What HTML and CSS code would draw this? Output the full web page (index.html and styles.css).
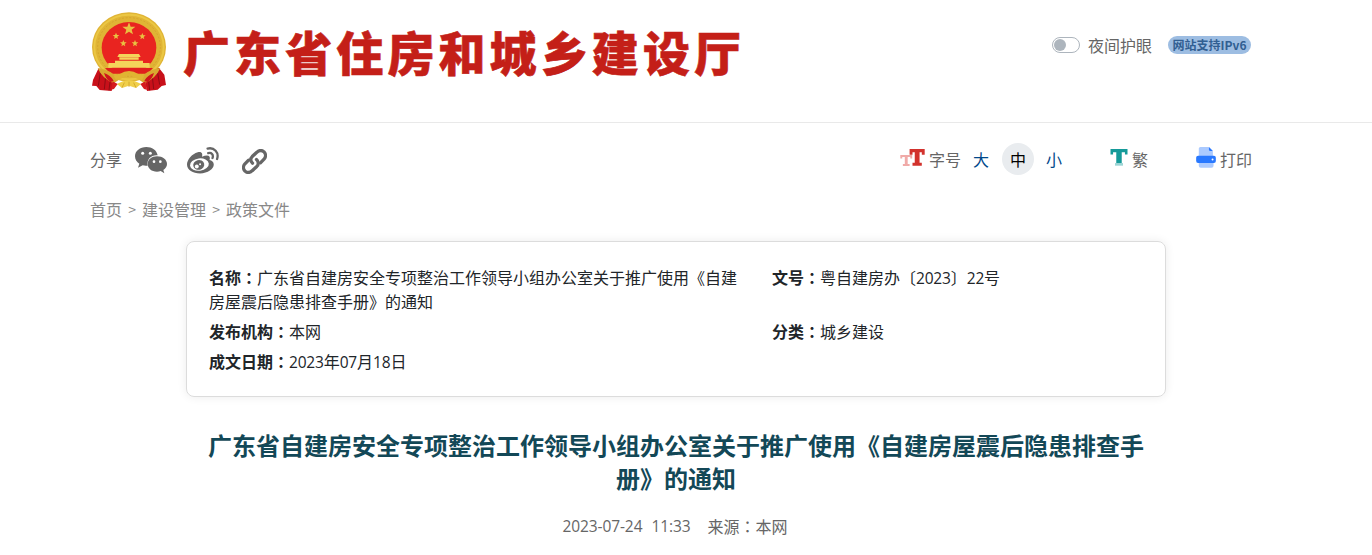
FILE: index.html
```html
<!DOCTYPE html>
<html lang="zh-CN">
<head>
    <meta charset="UTF-8">
    <meta name="viewport" content="width=device-width, initial-scale=1.0">
    <title>广东省住房和城乡建设厅</title>
    <link rel="stylesheet" href="styles.css">
</head>
<body>
    <div class="header">
        <div class="logo">
            <svg class="emblem" viewBox="21 22 222 240">
                <path d="M40 192L24 226L21 243L34 244L44 256L80 259L88 222L178 222L186 259L218 255L230 244L243 241L238 210L222 190Z" fill="#c8101a"/>
                <path d="M46 205L40 243M62 215L58 254M76 222L72 257M218 205L224 240M202 215L206 253M190 222L194 257" stroke="#8f0c14" stroke-width="3"/>
                <ellipse cx="132" cy="127" rx="111" ry="104" fill="#e0b435"/>
                <ellipse cx="132" cy="127" rx="104" ry="97" fill="none" stroke="#ebc744" stroke-width="6"/>
                <ellipse cx="132" cy="127" rx="94" ry="88" fill="none" stroke="#cf9f28" stroke-width="2" stroke-dasharray="6 5"/>
                <ellipse cx="132" cy="129" rx="82" ry="77" fill="#e92420"/>
                <path d="M132 53L137 66L151 66L140 75L144 89L132 81L120 89L124 75L112 66L127 66Z" fill="#e9c141"/>
                <path id="star" d="M93 84L96 91L103 91L97 96L99 103L93 99L87 103L89 96L83 91L90 91Z" fill="#e9c141"/>
                <use href="#star" x="79" y="1"/>
                <use href="#star" x="22" y="22"/>
                <use href="#star" x="57" y="22"/>
                <path d="M102 148H162L167 157H97ZM103 158H161V165H103ZM90 168H174V175H194V189H70V175H90Z" fill="#f4d45a"/>
                <path d="M60 190H204L188 207H76Z" fill="#e0201d"/>
                <path d="M38 190Q83 196 101 226L86 236Q52 222 38 190ZM226 190Q181 196 163 226L178 236Q212 222 226 190Z" fill="#d9aa30"/>
                <path d="M57 205Q76 211 86 228L76 233Q62 222 57 205ZM207 205Q188 211 178 228L188 233Q202 222 207 205Z" fill="#cf151b"/>
                <path d="M104 208Q132 190 160 208L178 213L171 226Q151 223 132 207Q113 223 93 226L86 213Z" fill="#e1b432"/>
                <path d="M96 238Q132 215 168 238L153 250L132 243L111 250Z" fill="#f0cf4a"/>
                <path d="M83 230L98 238L87 253L78 255ZM181 230L166 238L177 253L186 255Z" fill="#d51a1f"/>
                <path d="M118 234L111 249M132 231V247M146 234L153 249" stroke="#c99822" stroke-width="2"/>
            </svg>
            <h1 class="site-name">广东省住房和城乡建设厅</h1>
        </div>
        <div class="header-right">
            <span class="switch"><i></i></span>
            <span class="night">夜间护眼</span>
            <span class="ipv6">网站支持IPv6</span>
        </div>
    </div>

    <div class="tools">
        <div class="share">
            <span>分享</span>
            <svg class="wechat" viewBox="0 0 96 81">
                <path d="M34 0C15 0 0 12 0 28C0 38 5 45 13 50L9 62L23 55Q30 57 38 56C34 36 50 23 68 25C65 9 51 0 34 0Z" fill="#666"/>
                <path d="M66 28C50 28 38 38 38 51C38 64 50 74 66 74Q72 74 77 72L88 79L85 69C92 65 96 58 96 51C96 38 83 28 66 28Z" fill="#666"/>
                <g fill="#fff"><circle cx="23" cy="19" r="4.5"/><circle cx="46" cy="19" r="4.5"/><circle cx="57" cy="44" r="4"/><circle cx="76" cy="44" r="4"/></g>
            </svg>
            <svg class="weibo" viewBox="0 0 98 81">
                <path d="M33 15C15 20 0 38 0 53C0 70 18 80 40 80C64 80 82 67 82 53C82 45 76 41 69 39C72 30 69 25 61 25Q54 25 46 29C48 21 47 12 33 15Z" fill="#666"/>
                <ellipse cx="38" cy="53" rx="29" ry="19" fill="#fff" transform="rotate(-7 38 53)"/>
                <ellipse cx="36" cy="54" rx="17" ry="15" fill="#666" transform="rotate(-15 36 54)"/>
                <circle cx="30" cy="59" r="6" fill="#fff"/><circle cx="40" cy="52" r="3" fill="#fff"/>
                <path d="M63 4C83-1 99 16 92 36M65 18C75 15 82 23 78 33" fill="none" stroke="#666" stroke-width="7" stroke-linecap="round"/>
            </svg>
            <svg class="link" viewBox="0 0 76 76">
                <g fill="none" stroke="#666" stroke-width="10" stroke-linecap="round" stroke-linejoin="round">
                    <path d="M32 43C25 37 25 29 31 23L45 10C52 3 62 3 67 9C73 15 73 24 67 31L56 42"/>
                    <path d="M44 32C51 38 51 47 45 53L31 66C24 73 14 73 9 67C3 61 3 52 9 45L20 34"/>
                </g>
            </svg>
        </div>
        <div class="actions">
            <svg class="font-icon" viewBox="0 0 76 53">
                <path d="M0 19H37V30H31V25H23V47H29V53H8V47H14V25H6V30H0Z" fill="#f0aaa8"/>
                <path d="M29 0H76V18H67V10H60V43H67V52H38V43H45V10H38V18H29Z" fill="#d2322d"/>
            </svg>
            <span>字号</span>
            <a class="size">大</a>
            <a class="size active">中</a>
            <a class="size">小</a>
            <svg class="trad-icon" viewBox="0 0 53 53">
                <path d="M0 0H53V17H45V10H35V45H18V10H8V17H0Z" fill="#159a99"/>
                <path d="M14 44H39V52H14Z" fill="#9bd5d5"/>
            </svg>
            <span>繁</span>
            <svg class="print-icon" viewBox="0 0 60 64">
                <path d="M13 0H38L51 13V30H8V5Q8 0 13 0Z" fill="#abcaff"/>
                <path d="M39 0L51 12H43Q39 12 39 8Z" fill="#2878ff"/>
                <path d="M8 43H53V57Q53 63 47 63H14Q8 63 8 57Z" fill="#abcaff"/>
                <rect y="27" width="60" height="22" rx="6" fill="#2878ff"/>
                <circle cx="50" cy="38" r="3" fill="#fff"/>
            </svg>
            <span>打印</span>
        </div>
    </div>

    <div class="crumbs"><a>首页</a><i>&gt;</i><a>建设管理</a><i>&gt;</i><a>政策文件</a></div>

    <div class="info">
        <div><b>名称<i lang="zh-TW">：</i></b>广东省自建房安全专项整治工作领导小组办公室关于推广使用《自建房屋震后隐患排查手册》的通知</div>
        <div><b>文号<i lang="zh-TW">：</i></b>粤自建房办〔<span class="num">2023</span>〕<span class="num">22</span>号</div>
        <div><b>发布机构<i lang="zh-TW">：</i></b>本网</div>
        <div><b>分类<i lang="zh-TW">：</i></b>城乡建设</div>
        <div><b>成文日期<i lang="zh-TW">：</i></b><span class="num">2023</span>年<span class="num">07</span>月<span class="num">18</span>日</div>
    </div>

    <h2 class="title">广东省自建房安全专项整治工作领导小组办公室关于推广使用《自建房屋震后隐患排查手册》的通知</h2>
    <div class="meta"><span class="num">2023-07-24</span><span class="num time">11:33</span><span>来源<i lang="zh-TW">：</i>本网</span></div>
</body>
</html>
```
FILE: styles.css
```css
*{
    margin: 0;
    padding: 0;
    box-sizing: border-box;
}
body{
    font: 16px/24px "Noto Sans CJK SC", sans-serif;
    color: #212529;
    background: #fff;
    overflow: hidden;
}
svg{
    display: block;
    flex: none;
}
i{
    font-style: normal;
}
.header{
    display: flex;
    justify-content: space-between;
    height: 123px;
    padding: 0 121px 0 92px;
    border-bottom: 1px solid #e9e9e9;
}
.logo{
    display: flex;
    padding-top: 12px;
}
.emblem{
    width: 74px;
    height: 80px;
}
.site-name{
    margin-left: 17px;
    font-size: 47px;
    line-height: 78px;
    font-weight: 900;
    letter-spacing: 4.1px;
    color: #c41f18;
    -webkit-text-stroke: 0.6px #c41f18;
    white-space: nowrap;
}
.header-right{
    display: flex;
    align-items: center;
    height: 90px;
    color: #666;
}
.switch{
    width: 28px;
    height: 16px;
    padding: 1px;
    border: 1px solid #adb5bd;
    border-radius: 8px;
}
.switch i{
    display: block;
    width: 12px;
    height: 12px;
    border-radius: 50%;
    background: #adb5bd;
}
.night{
    margin: 0 16px 0 8px;
}
.ipv6{
    width: 83px;
    height: 18px;
    border-radius: 9px;
    background: #9dbde2;
    color: #315f92;
    font-size: 12px;
    line-height: 18px;
    font-weight: bold;
    text-align: center;
}
.tools{
    display: flex;
    justify-content: space-between;
    height: 71px;
    padding: 0 120px 0 90px;
    color: #666;
}
.share, .actions{
    display: flex;
    align-items: center;
    height: 71px;
}
.wechat{
    width: 32px;
    height: 27px;
    margin: 4px 20px 0 13px;
}
.weibo{
    width: 32px;
    height: 27px;
    margin: 4px 23px 0 0;
}
.link{
    width: 25px;
    height: 25px;
    margin-top: 5px;
}
.font-icon{
    width: 25px;
    height: 17px;
    margin: 0 4px 2px 0;
}
.size{
    width: 32px;
    margin-left: 4px;
    line-height: 32px;
    border-radius: 50%;
    text-align: center;
    color: #00478a;
}
.size.active{
    margin-left: 5px;
    background: #e9ecef;
    color: #000;
}
.trad-icon{
    width: 18px;
    height: 17px;
    margin: 0 4px 2px 40px;
}
.print-icon{
    width: 20px;
    height: 21px;
    margin: 0 4px 2px 48px;
}
.crumbs{
    display: flex;
    height: 32px;
    margin-left: 90px;
    line-height: 31px;
    color: #888;
}
.crumbs i{
    width: 20px;
    font-size: 14px;
    text-align: center;
}
.info{
    display: grid;
    grid-template-columns: 533px 1fr;
    column-gap: 30px;
    row-gap: 6px;
    align-content: start;
    width: 980px;
    height: 156px;
    margin: 15px 0 0 186px;
    padding: 23px 22px;
    border: 1px solid #dcdcdc;
    border-radius: 8px;
    box-shadow: 0 0 10px rgba(0, 0, 0, 0.08);
}
/* 冒号居中 */
.info i, .meta i{
    font-family: "Noto Sans CJK TC", sans-serif;
}
.num{
    font-family: "Open Sans", "Noto Sans CJK SC", sans-serif;
    font-size: 15.5px;
    letter-spacing: -0.2px;
}
.title{
    width: 940px;
    margin: 31px 0 0 206px;
    font-size: 24px;
    line-height: 33px;
    text-align: center;
    color: #134857;
}
.meta{
    display: flex;
    justify-content: center;
    width: 980px;
    margin: 20px 0 0 185px;
    color: #666;
}
.meta .num{
    letter-spacing: -0.1px;
}
.meta .time{
    margin: 0 17px 0 9px;
}
```
